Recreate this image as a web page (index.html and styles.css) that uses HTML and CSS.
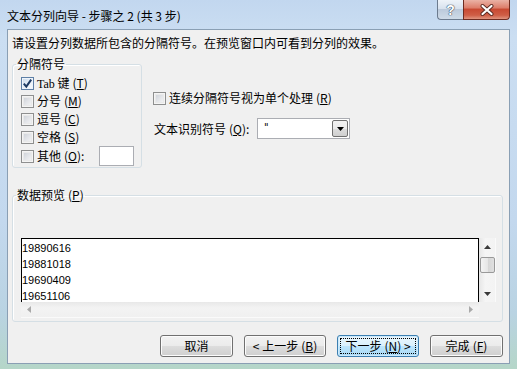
FILE: index.html
```html
<!DOCTYPE html>
<html lang="zh-CN">
<head>
<meta charset="utf-8">
<title>文本分列向导</title>
<link rel="stylesheet" href="styles.css">
</head>
<body>
<div class="window">
  <div class="titlebar">
    <span class="title">文本分列向导 - 步骤之 2 (共 3 步)</span>
    <div class="caption">
      <span class="cap help">?</span>
      <span class="cap close">
        <svg width="16" height="12" viewBox="0 0 16 12">
          <path d="M3.5 2 L12.5 10 M12.5 2 L3.5 10" stroke="#5a2a22" stroke-width="4" stroke-linecap="round"/>
          <path d="M3.5 2 L12.5 10 M12.5 2 L3.5 10" stroke="#ffffff" stroke-width="2.2" stroke-linecap="round"/>
        </svg>
      </span>
    </div>
  </div>
  <div class="client">
    <p class="intro">请设置分列数据所包含的分隔符号。在预览窗口内可看到分列的效果。</p>
    <div class="opts">
      <fieldset class="group delim">
        <legend>分隔符号</legend>
        <div class="delim-list">
          <div class="row"><span class="cb checked"><svg width="11" height="11" viewBox="0 0 11 11"><path d="M1.8 5.6 L4.3 8.6 L9.2 1.6" fill="none" stroke="#1d3a63" stroke-width="2"/></svg></span><span class="lt"><span class="tab">Tab</span> 键<span class="ak">(<u>T</u>)</span></span></div>
          <div class="row"><span class="cb"></span><span class="lt">分号<span class="ak">(<u>M</u>)</span></span></div>
          <div class="row"><span class="cb"></span><span class="lt">逗号<span class="ak">(<u>C</u>)</span></span></div>
          <div class="row"><span class="cb"></span><span class="lt">空格<span class="ak">(<u>S</u>)</span></span></div>
          <div class="row other"><span class="cb"></span><span class="lt">其他<span class="ak">(<u>O</u>)</span>:</span><span class="textbox"></span></div>
        </div>
      </fieldset>
      <div class="rightcol">
        <div class="row"><span class="cb"></span><span class="lt">连续分隔符号视为单个处理<span class="ak">(<u>R</u>)</span></span></div>
        <div class="combo-row">
          <span class="lbl">文本识别符号<span class="ak">(<u>Q</u>)</span>:</span>
          <div class="combo">
            <span class="val">"</span>
            <span class="drop"><svg width="7" height="4" viewBox="0 0 7 4"><path d="M0 0 L7 0 L3.5 4 Z" fill="#000"/></svg></span>
          </div>
        </div>
      </div>
    </div>
    <fieldset class="group preview">
      <legend>数据预览<span class="ak">(<u>P</u>)</span></legend>
      <div class="pv">
        <div class="pv-text">
          <div class="line">19890616</div>
          <div class="line">19881018</div>
          <div class="line">19690409</div>
          <div class="line">19651106</div>
        </div>
        <div class="vscroll">
          <span class="arr"><svg width="7" height="4" viewBox="0 0 7 4"><path d="M0 4 L7 4 L3.5 0 Z" fill="#3a3a3a"/></svg></span>
          <span class="thumb"></span>
          <span class="vfill"></span>
          <span class="arr"><svg width="7" height="4" viewBox="0 0 7 4"><path d="M0 0 L7 0 L3.5 4 Z" fill="#3a3a3a"/></svg></span>
        </div>
        <div class="hscroll">
          <span class="harr"><svg width="4" height="7" viewBox="0 0 4 7"><path d="M4 0 L4 7 L0 3.5 Z" fill="#a9a9a9"/></svg></span>
          <span class="harr"><svg width="4" height="7" viewBox="0 0 4 7"><path d="M0 0 L0 7 L4 3.5 Z" fill="#a9a9a9"/></svg></span>
        </div>
        <div class="corner"></div>
      </div>
    </fieldset>
    <div class="buttons">
      <span class="btn w73">取消</span>
      <span class="btn w82">&lt; 上一步<span class="ak">(<u>B</u>)</span></span>
      <span class="btn w82 default"><span class="focus">下一步<span class="ak">(<u>N</u>)</span>&nbsp;&gt;</span></span>
      <span class="btn w73">完成<span class="ak">(<u>F</u>)</span></span>
    </div>
  </div>
</div>
</body>
</html>
```

FILE: styles.css
```css
* { box-sizing: border-box; }
html, body { margin: 0; padding: 0; }
body {
  width: 517px;
  height: 369px;
  overflow: hidden;
  font-family: "Noto Sans CJK SC", "Liberation Sans", sans-serif;
  font-size: 12px;
  color: #000;
}
.window {
  width: 517px;
  height: 369px;
  padding: 0 7px 5px 7px;
  display: flex;
  flex-direction: column;
  background: linear-gradient(180deg, #c2d7ef 0%, #cbdef2 10%, #c3d8ee 60%, #b9d3e2 85%, #b5d6c8 100%);
}
.titlebar {
  height: 29px;
  display: flex;
  align-items: flex-start;
  flex: none;
}
.title {
  margin-top: 9px;
  line-height: 14px;
  white-space: nowrap;
  color: #000;
}
.caption {
  margin-left: auto;
  display: flex;
}
.cap {
  height: 20px;
  display: flex;
  align-items: center;
  justify-content: center;
}
.help {
  width: 26px;
  border: 1px solid #6c7b8e;
  border-top: none;
  border-right: none;
  border-radius: 0 0 0 4px;
  background: linear-gradient(180deg, #eef3f9 0%, #d8e2ee 45%, #bccadb 50%, #cfdbe8 100%);
  color: #fff;
  font-family: "Liberation Sans", sans-serif;
  font-weight: bold;
  font-size: 14px;
  text-shadow: 0 0 1px #39495c, 0 0 1px #39495c, 0 0 1px #39495c;
}
.close {
  width: 47px;
  border: 1px solid #6e2b20;
  border-top: none;
  border-radius: 0 0 4px 0;
  background: linear-gradient(180deg, #eab2a5 0%, #dd7f6c 40%, #c84a33 50%, #cf5e46 80%, #e09580 100%);
}
.client {
  flex: 1;
  border: 1px solid #8a9fb4;
  background: #f0f0f0;
  padding: 6px 6px 0 4px;
  display: flex;
  flex-direction: column;
}
.intro {
  margin: 0;
  line-height: 14px;
  white-space: nowrap;
}
u { text-decoration: underline; text-underline-offset: 1px; }
.ak { margin-left: 3px; }
.tab { font-family: "Liberation Serif", serif; }
.opts {
  display: flex;
  margin-top: 8px;
  align-items: flex-start;
}
.group {
  margin: 0;
  padding: 0;
  border: 1px solid #d5dfe5;
  border-radius: 3px;
  box-shadow: inset 1px 1px 0 #fff;
  min-width: 0;
}
.group legend {
  margin-left: 3px;
  padding: 0 1px;
  line-height: 12px;
  font-size: 12px;
}
.delim {
  width: 130px;
}
.delim-list {
  padding: 4px 7px 1px 8px;
  display: flex;
  flex-direction: column;
}
.row {
  height: 18px;
  display: flex;
  align-items: center;
  white-space: nowrap;
}
.row.other { height: 20px; }
.lt { margin-left: 3px; line-height: 14px; }
.cb {
  width: 13px;
  height: 13px;
  flex: none;
  border: 1px solid #8e8f8f;
  background: linear-gradient(135deg, #c6cbd2 0%, #e2e4e8 50%, #f9f9f9 100%);
  box-shadow: inset 0 0 0 1px #f4f4f4, inset 0 0 0 2px #e9e9e9;
  display: flex;
  align-items: center;
  justify-content: center;
}
.cb.checked {
  border-color: #5d7fa6;
  background: linear-gradient(135deg, #c6d7ea 0%, #e5eef7 50%, #fbfdff 100%);
  box-shadow: inset 0 0 0 1px #eef4fb;
}
.textbox {
  margin-left: auto;
  width: 35px;
  height: 20px;
  border: 1px solid #abadb3;
  background: #fff;
}
.rightcol {
  margin-left: 11px;
  padding-top: 31px;
  display: flex;
  flex-direction: column;
}
.combo-row {
  margin-top: 11px;
  display: flex;
  align-items: center;
  height: 21px;
}
.lbl {
  width: 104px;
  padding-left: 1px;
  white-space: nowrap;
}
.combo {
  width: 93px;
  height: 21px;
  border: 1px solid #abadb3;
  background: #fff;
  display: flex;
  padding: 1px;
}
.val {
  flex: 1;
  padding-left: 5px;
  padding-top: 2px;
  line-height: 11px;
  font-family: "DejaVu Sans", sans-serif;
  font-size: 10px;
  color: #000;
}
.drop {
  width: 16px;
  height: 17px;
  border: 1px solid #707070;
  border-radius: 2px;
  background: linear-gradient(180deg, #f2f2f2 0%, #ebebeb 50%, #dddddd 51%, #cfcfcf 100%);
  display: flex;
  align-items: center;
  justify-content: center;
}
.preview {
  margin-top: 21px;
}
.pv {
  margin: 37px 6px 3px 8px;
  display: grid;
  grid-template-columns: 458px 17px;
  grid-template-rows: 64px 16px;
}
.pv-text {
  border: 1px solid #000;
  border-bottom: none;
  background: #fff;
  overflow: hidden;
  padding-top: 1px;
  font-family: "Liberation Sans", sans-serif;
  font-size: 11px;
}
.line { line-height: 16px; height: 16px; }
.vscroll {
  background: linear-gradient(90deg, #e6e6e6, #f5f5f5 40%, #f3f3f3);
  border-right: 1px solid #fafafa;
  display: flex;
  flex-direction: column;
  align-items: center;
}
.arr {
  height: 17px;
  width: 17px;
  display: flex;
  align-items: center;
  justify-content: center;
  flex: none;
}
.thumb {
  width: 15px;
  height: 16px;
  margin-top: 2px;
  border: 1px solid #999;
  border-radius: 2px;
  background: linear-gradient(90deg, #f3f3f3 0%, #e6e6e6 50%, #d5d5d5 51%, #e0e0e0 100%);
  flex: none;
}
.vfill { flex: 1; }
.hscroll {
  background: linear-gradient(180deg, #e8e8e8, #f3f3f3 40%, #f0f0f0);
  border-bottom: 1px solid #fafafa;
  display: flex;
  justify-content: space-between;
  align-items: center;
  padding: 0 5px 0 5px;
}
.harr {
  width: 6px;
  display: flex;
  align-items: center;
  justify-content: center;
}
.corner { background: #f0f0f0; }
.buttons {
  margin-top: 13px;
  display: flex;
  justify-content: flex-end;
  gap: 11px;
}
.btn {
  height: 22px;
  border: 1px solid #707070;
  border-radius: 3px;
  background: linear-gradient(180deg, #f2f2f2 0%, #ebebeb 50%, #dddddd 51%, #cfcfcf 100%);
  box-shadow: inset 0 0 0 1px #fcfcfc;
  display: flex;
  align-items: center;
  justify-content: center;
  white-space: nowrap;
  line-height: 14px;
}
.w73 { width: 73px; }
.w82 { width: 82px; }
.btn.default {
  border-color: #3c7fb1;
  background: linear-gradient(180deg, #eaf6fd 0%, #d9f0fc 50%, #bee6fd 51%, #a7d9f5 100%);
  box-shadow: inset 0 0 0 1px #cce9fb;
  padding: 2px;
}
.focus {
  flex: 1;
  align-self: stretch;
  border: 1px dotted #000;
  display: flex;
  align-items: center;
  justify-content: center;
}
```
